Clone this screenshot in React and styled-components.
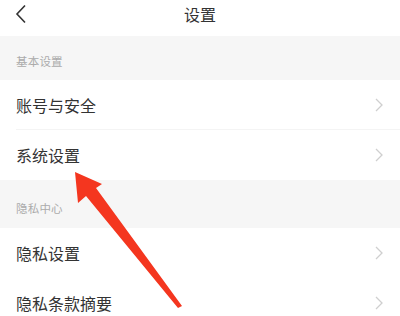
import React from "react";
import styled, { createGlobalStyle } from "styled-components";

const Global = createGlobalStyle`
  html, body {
    margin: 0;
    padding: 0;
    background: #ffffff;
  }
  body {
    font-family: "Noto Sans CJK SC", "Noto Sans", sans-serif;
  }
`;

const Page = styled.div`
  position: relative;
  width: 400px;
  height: 316px;
  overflow: hidden;
  background: #ffffff;
`;

const Header = styled.div`
  position: relative;
  height: 36px;
  display: flex;
  align-items: center;
  justify-content: center;
`;

const Back = styled.div`
  position: absolute;
  left: 14px;
  top: 4px;
  width: 14px;
  height: 20px;
`;

const Title = styled.div`
  font-size: 16px;
  color: #333333;
  margin-top: -8px;
`;

const Section = styled.div`
  height: ${(p) => p.h}px;
  box-sizing: border-box;
  background: #f6f6f6;
  display: flex;
  align-items: flex-end;
  padding: 0 16px ${(p) => p.pb}px;
  font-size: 11.5px;
  color: #ababab;
  letter-spacing: 0.2px;
`;

const Row = styled.div`
  height: 50px;
  display: flex;
  align-items: center;
  justify-content: space-between;
  padding: 0 16px;
  position: relative;
  &::after {
    content: "";
    display: ${(p) => (p.line ? "block" : "none")};
    position: absolute;
    left: 16px;
    right: 0;
    bottom: 0;
    height: 1px;
    background: #f4f4f4;
  }
`;

const Label = styled.span`
  font-size: 16px;
  color: #333333;
`;

const Chevron = styled.svg`
  width: 8px;
  height: 14px;
  margin-right: 1px;
`;

const Arrow = styled.svg`
  position: absolute;
  left: 0;
  top: 0;
  pointer-events: none;
`;

function Item({ label, line }) {
  return (
    <Row line={line}>
      <Label>{label}</Label>
      <Chevron viewBox="0 0 8 14">
        <path d="M1 1 L7 7 L1 13" fill="none" stroke="#cfcfcf" strokeWidth="1.3" />
      </Chevron>
    </Row>
  );
}

export default function App() {
  return (
    <Page>
      <Global />
      <Header>
        <Back>
          <svg width="14" height="20" viewBox="0 0 14 20">
            <path d="M11 1.5 L3 10 L11 18.5" fill="none" stroke="#333" strokeWidth="1.6" />
          </svg>
        </Back>
        <Title>设置</Title>
      </Header>
      <Section h={44} pb={11}>基本设置</Section>
      <Item label="账号与安全" line />
      <Item label="系统设置" />
      <Section h={48} pb={12}>隐私中心</Section>
      <Item label="隐私设置" />
      <Item label="隐私条款摘要" />
      <Arrow width="400" height="316" viewBox="0 0 400 316">
        <polygon points="75,172 102,184 96,188 182,306 178,308 86,196 78,203" fill="#f4361f" />
      </Arrow>
    </Page>
  );
}
